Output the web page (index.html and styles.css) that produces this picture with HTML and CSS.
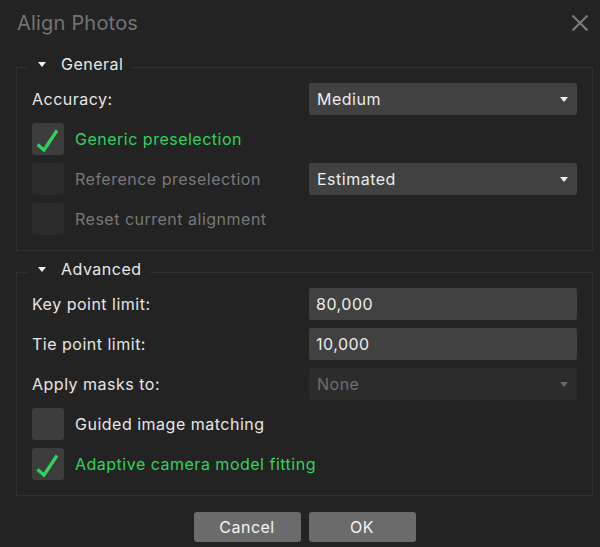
FILE: index.html
```html
<!DOCTYPE html>
<html>
<head>
<meta charset="utf-8">
<link rel="stylesheet" href="styles.css">
</head>
<body>
<div class="dialog">
  <div class="titlebar">
    <span class="title">Align Photos</span>
    <svg class="close" width="18" height="18" viewBox="0 0 18 18"><path d="M1.5 1.5 L16.5 16.5 M16.5 1.5 L1.5 16.5" stroke="#7a7a7a" stroke-width="2.2" fill="none"/></svg>
  </div>

  <fieldset class="group">
    <legend class="legend"><span class="tri"></span>General</legend>
    <div class="rows">
      <div class="row">
        <span class="label">Accuracy:</span>
        <div class="combo"><span>Medium</span><span class="arrow"></span></div>
      </div>
      <div class="row">
        <div class="check checked"><svg width="32" height="32" viewBox="0 0 32 32"><path d="M5.5 21.5 L12 27 L25 7.5" stroke="#2fd35c" stroke-width="3.2" fill="none" stroke-linejoin="miter" stroke-linecap="butt"/></svg></div>
        <span class="label green">Generic preselection</span>
      </div>
      <div class="row">
        <div class="check disabled"></div>
        <span class="label dim">Reference preselection</span>
        <div class="combo"><span>Estimated</span><span class="arrow"></span></div>
      </div>
      <div class="row">
        <div class="check disabled"></div>
        <span class="label dim">Reset current alignment</span>
      </div>
    </div>
  </fieldset>

  <fieldset class="group adv">
    <legend class="legend"><span class="tri"></span>Advanced</legend>
    <div class="rows">
      <div class="row">
        <span class="label">Key point limit:</span>
        <div class="input">80,000</div>
      </div>
      <div class="row">
        <span class="label">Tie point limit:</span>
        <div class="input">10,000</div>
      </div>
      <div class="row">
        <span class="label">Apply masks to:</span>
        <div class="combo off"><span>None</span><span class="arrow"></span></div>
      </div>
      <div class="row">
        <div class="check"></div>
        <span class="label">Guided image matching</span>
      </div>
      <div class="row">
        <div class="check checked"><svg width="32" height="32" viewBox="0 0 32 32"><path d="M5.5 21.5 L12 27 L25 7.5" stroke="#2fd35c" stroke-width="3.2" fill="none" stroke-linejoin="miter" stroke-linecap="butt"/></svg></div>
        <span class="label green">Adaptive camera model fitting</span>
      </div>
    </div>
  </fieldset>

  <div class="buttons">
    <button class="btn">Cancel</button>
    <button class="btn">OK</button>
  </div>
</div>
</body>
</html>
```
FILE: styles.css
```css
html, body {
  margin: 0;
  padding: 0;
  background: #232323;
}
body {
  font-family: Inter, "Liberation Sans", sans-serif;
  font-size: 16px;
  letter-spacing: 0.5px;
  color: #e6e6e6;
  width: 600px;
  height: 547px;
  overflow: hidden;
}
.dialog {
  padding: 0 7px 0 16px;
}
.titlebar {
  display: flex;
  align-items: center;
  justify-content: space-between;
  height: 46px;
  padding-right: 2px;
}
.title {
  font-size: 20px;
  letter-spacing: 0.2px;
  color: #737373;
  margin-left: 1px;
}
.close {
  display: block;
  margin-right: 2px;
}
.group {
  border: 1px solid #303030;
  margin: 8px 0 0 0;
  padding: 3px 15px 15px 15px;
  min-width: 0;
}
.group.adv {
  margin-top: 8px;
}
.legend {
  display: flex;
  align-items: center;
  margin-left: -5px;
  padding: 0 8px 6px 11px;
  line-height: 20px;
  color: #e8e8e8;
}
.tri {
  width: 0;
  height: 0;
  border-left: 4.5px solid transparent;
  border-right: 4.5px solid transparent;
  border-top: 5px solid #f0f0f0;
  margin-right: 15px;
}
.rows {
  display: flex;
  flex-direction: column;
  gap: 8px;
}
.row {
  display: flex;
  align-items: center;
  height: 32px;
}
.label {
  flex: 1;
}
.check + .label {
  margin-left: 11px;
}
.green { color: #30d35d; }
.dim { color: #787878; }
.check {
  width: 32px;
  height: 32px;
  border-radius: 3px;
  background: #3c3c3c;
  flex: none;
}
.check svg { display: block; }
.check.disabled { background: #2b2b2b; }
.combo, .input {
  width: 268px;
  height: 32px;
  box-sizing: border-box;
  background: #414141;
  border-radius: 2px;
  display: flex;
  align-items: center;
  justify-content: space-between;
  padding: 0 9px 0 8px;
  color: #ececec;
  flex: none;
}
.input { padding-left: 7px; }
.combo.off {
  background: #2c2c2c;
  color: #6f6f6f;
}
.arrow {
  width: 0;
  height: 0;
  border-left: 4.5px solid transparent;
  border-right: 4.5px solid transparent;
  border-top: 5px solid #f0f0f0;
}
.combo.off .arrow { border-top-color: #6a6a6a; }
.buttons {
  display: flex;
  justify-content: center;
  gap: 8px;
  margin-top: 16px;
}
.btn {
  width: 107px;
  height: 30px;
  border: none;
  border-radius: 3px;
  background: #6b6b6b;
  color: #f4f4f4;
  font-family: inherit;
  font-size: 16px;
  letter-spacing: 0.5px;
  padding: 0;
}
```
